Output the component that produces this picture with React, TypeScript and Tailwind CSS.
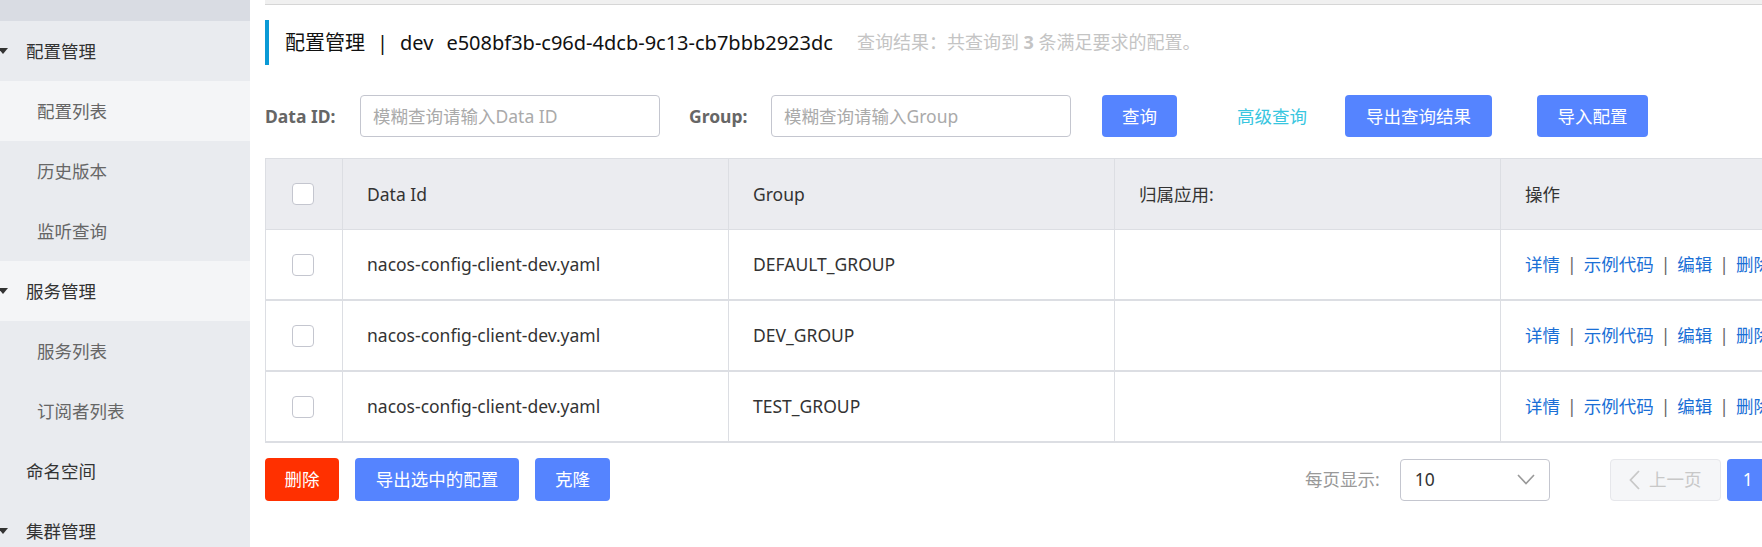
import React from "react";

const FONT = "font-['Noto_Sans','Noto_Sans_CJK_SC',sans-serif]";

function Tri() {
  return (
    <svg width="10" height="6" viewBox="0 0 10 6" className="absolute left-[-2px] top-1/2 -translate-y-1/2">
      <path d="M0 0 L10 0 L5 6 Z" fill="#333" />
    </svg>
  );
}

function MenuHead({ label, light, arrow = true }: { label: string; light?: boolean; arrow?: boolean }) {
  return (
    <div className={`relative shrink-0 h-[60px] flex items-center pl-[26px] text-[17.5px] text-[#333] ${light ? "bg-[#f4f5f7]" : ""}`}>
      {arrow && <Tri />}
      {label}
    </div>
  );
}

function MenuItem({ label, active }: { label: string; active?: boolean }) {
  return (
    <div className={`shrink-0 h-[60px] flex items-center pl-[37px] text-[17.5px] text-[#666] ${active ? "bg-[#f4f5f7]" : ""}`}>
      {label}
    </div>
  );
}

function Btn({ children, className = "" }: { children: React.ReactNode; className?: string }) {
  return (
    <div className={`shrink-0 h-[42px] rounded-[4px] bg-[#5584ff] text-white text-[17.5px] flex items-center justify-center ${className}`}>
      {children}
    </div>
  );
}

function Checkbox() {
  return <div className="w-[22px] h-[22px] rounded-[4px] border border-[#c4c6cf] bg-white" />;
}

const rows = [
  { id: "nacos-config-client-dev.yaml", group: "DEFAULT_GROUP" },
  { id: "nacos-config-client-dev.yaml", group: "DEV_GROUP" },
  { id: "nacos-config-client-dev.yaml", group: "TEST_GROUP" },
];

const COLS = "grid grid-cols-[77px_386px_386px_386px_386px]";

export default function App() {
  return (
    <div className={`w-[1762px] h-[547px] overflow-hidden flex bg-white ${FONT}`}>
      <aside className="w-[250px] shrink-0 bg-[#e9ebef] flex flex-col overflow-hidden">
        <div className="shrink-0 h-[21px] bg-[#d9dce3]" />
        <MenuHead label="配置管理" />
        <MenuItem label="配置列表" active />
        <MenuItem label="历史版本" />
        <MenuItem label="监听查询" />
        <MenuHead label="服务管理" light />
        <MenuItem label="服务列表" />
        <MenuItem label="订阅者列表" />
        <MenuHead label="命名空间" arrow={false} />
        <MenuHead label="集群管理" />
      </aside>

      <main className="flex-1 min-w-0 pl-[15px]">
        <div className="h-[5px] w-[1600px] bg-[#f0f0f0] border-b border-[#d6d6d6]" />

        <div className="mt-[15px] h-[45px] border-l-4 border-[#0a9ad6] pl-[16px] flex items-center whitespace-nowrap">
          <span className="text-[20px] text-[#111]">配置管理</span>
          <span className="text-[20px] text-[#111] mx-[12px]">|</span>
          <span className="text-[20px] text-[#111]">dev</span>
          <span className="text-[20px] text-[#111] ml-[13px]">e508bf3b-c96d-4dcb-9c13-cb7bbb2923dc</span>
          <span className="ml-[24px] text-[18px] text-[#c4c4c4]">
            查询结果：共查询到 <b className="font-bold">3</b> 条满足要求的配置。
          </span>
        </div>

        <div className="mt-[30px] h-[42px] flex items-center whitespace-nowrap">
          <span className="shrink-0 text-[17.5px] font-bold text-[#666] w-[95px]">Data ID:</span>
          <input
            className="shrink-0 w-[300px] h-[42px] border border-[#c4c6cf] rounded-[4px] px-[12px] text-[17.5px] outline-none placeholder:text-[#aaa]"
            placeholder="模糊查询请输入Data ID"
          />
          <span className="shrink-0 ml-[29px] text-[17.5px] font-bold text-[#666] w-[82px]">Group:</span>
          <input
            className="shrink-0 w-[300px] h-[42px] border border-[#c4c6cf] rounded-[4px] px-[12px] text-[17.5px] outline-none placeholder:text-[#aaa]"
            placeholder="模糊查询请输入Group"
          />
          <Btn className="ml-[31px] w-[75px]">查询</Btn>
          <span className="shrink-0 ml-[60px] text-[17.5px] text-[#38c6df]">高级查询</span>
          <Btn className="ml-[38px] w-[147px]">导出查询结果</Btn>
          <Btn className="ml-[45px] w-[111px]">导入配置</Btn>
        </div>

        <div className="mt-[21px] w-[1621px] border-t border-l border-[#dcdee3] text-[17.5px] text-[#333]">
          <div className={`${COLS} h-[71px] bg-[#ebecf0] border-b border-[#dcdee3]`}>
            <div className="flex items-center pl-[26px] border-r border-[#dcdee3]"><Checkbox /></div>
            <div className="flex items-center pl-[24px] border-r border-[#dcdee3]">Data Id</div>
            <div className="flex items-center pl-[24px] border-r border-[#dcdee3]">Group</div>
            <div className="flex items-center pl-[24px] border-r border-[#dcdee3]">归属应用:</div>
            <div className="flex items-center pl-[24px]">操作</div>
          </div>
          {rows.map((r, i) => (
            <div key={i} className={`${COLS} h-[71px] border-b-2 border-[#dcdee3]`}>
              <div className="flex items-center pl-[26px] border-r border-[#dcdee3]"><Checkbox /></div>
              <div className="flex items-center pl-[24px] border-r border-[#dcdee3]">{r.id}</div>
              <div className="flex items-center pl-[24px] border-r border-[#dcdee3]">{r.group}</div>
              <div className="flex items-center pl-[24px] border-r border-[#dcdee3]"></div>
              <div className="flex items-center pl-[24px] whitespace-nowrap">
                <span className="text-[#1a6fd6]">详情</span>
                <span className="mx-[7px] text-[#666]">|</span>
                <span className="text-[#1a6fd6]">示例代码</span>
                <span className="mx-[7px] text-[#666]">|</span>
                <span className="text-[#1a6fd6]">编辑</span>
                <span className="mx-[7px] text-[#666]">|</span>
                <span className="text-[#1a6fd6]">删除</span>
              </div>
            </div>
          ))}
        </div>

        <div className="mt-[15px] h-[43px] flex items-center whitespace-nowrap">
          <div className="shrink-0 h-[43px] w-[74px] rounded-[4px] bg-[#ff3000] text-white text-[17.5px] flex items-center justify-center">删除</div>
          <Btn className="ml-[16px] h-[43px] w-[164px]">导出选中的配置</Btn>
          <Btn className="ml-[16px] h-[43px] w-[75px]">克隆</Btn>

          <span className="shrink-0 ml-[695px] text-[17.5px] text-[#999]">每页显示:</span>
          <div className="shrink-0 ml-[20px] w-[150px] h-[42px] border border-[#c4c6cf] rounded-[4px] flex items-center justify-between pl-[14px] pr-[14px] text-[17.5px] text-[#333]">
            <span>10</span>
            <svg width="18" height="11" viewBox="0 0 18 11">
              <path d="M1 1 L9 9.5 L17 1" fill="none" stroke="#999" strokeWidth="1.6" />
            </svg>
          </div>
          <div className="shrink-0 ml-[60px] w-[111px] h-[42px] border border-[#e6e7eb] bg-[#f5f6f8] rounded-[4px] flex items-center justify-center gap-[9px] text-[17.5px] text-[#c8c8c8]">
            <svg width="11" height="20" viewBox="0 0 11 20">
              <path d="M10 1 L1.5 10 L10 19" fill="none" stroke="#c8c8c8" strokeWidth="1.8" />
            </svg>
            <span>上一页</span>
          </div>
          <div className="shrink-0 ml-[6px] w-[42px] h-[42px] rounded-[4px] bg-[#5584ff] text-white text-[17.5px] flex items-center justify-center">1</div>
          <div className="shrink-0 ml-[6px] w-[111px] h-[42px] border border-[#e6e7eb] bg-[#f5f6f8] rounded-[4px] flex items-center justify-center gap-[8px] text-[17.5px] text-[#c8c8c8]">
            <span>下一页</span>
          </div>
        </div>
      </main>
    </div>
  );
}
